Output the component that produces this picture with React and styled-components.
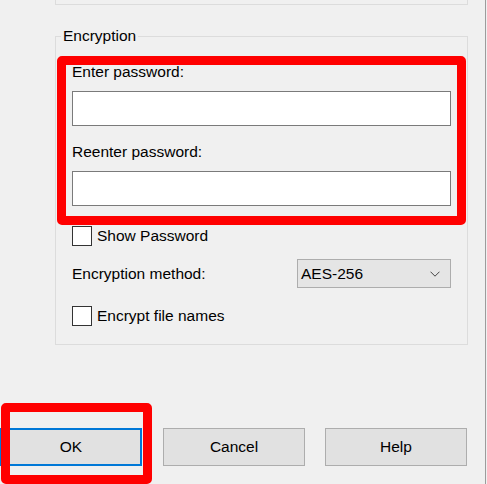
import styled, { createGlobalStyle } from "styled-components"

const Global = createGlobalStyle`
  html, body {
    margin: 0;
    padding: 0;
    background: #f0f0f0;
  }
  * { box-sizing: border-box; }
`;

export default function App(){
  return (
    <>
      <Global />
      <Dialog>
        <PrevGroup />
        <GroupBox>
          <Legend>Encryption</Legend>
          <PasswordGroup>
            <FieldLabel>Enter password:</FieldLabel>
            <TextInput type="password" />
            <FieldLabel $top={17}>Reenter password:</FieldLabel>
            <TextInput type="password" />
            <Highlight $top={-7} $right={-15} $bottom={-19} $left={-15} />
          </PasswordGroup>

          <CheckRow $top={20}>
            <Box />
            <span>Show Password</span>
          </CheckRow>

          <MethodRow>
            <span>Encryption method:</span>
            <Dropdown>
              <span>AES-256</span>
              <svg width="10" height="6" viewBox="0 0 10 6">
                <path d="M0.5 0.7 L5 5.2 L9.5 0.7" fill="none" stroke="#444" strokeWidth="1" />
              </svg>
            </Dropdown>
          </MethodRow>

          <CheckRow $top={18}>
            <Box />
            <span>Encrypt file names</span>
          </CheckRow>
        </GroupBox>

        <ButtonRow>
          <Slot>
            <Button $primary>OK</Button>
            <Highlight $top={-25} $right={-10} $bottom={-18} $left={1} />
          </Slot>
          <Button>Cancel</Button>
          <Button>Help</Button>
        </ButtonRow>
      </Dialog>
    </>
  );
}

const Dialog = styled.div`
  width: 486px;
  height: 484px;
  border-right: 1px solid #9c9c9c;
  display: flex;
  flex-direction: column;
  font-family: "Liberation Sans", Arial, sans-serif;
  font-size: 15.5px;
  color: #000;
`;

const PrevGroup = styled.div`
  margin-left: 55px;
  width: 413px;
  height: 5px;
  border: 1px solid #dcdcdc;
  border-top: none;
`;

const GroupBox = styled.fieldset`
  margin: 22px 0 0 55px;
  width: 413px;
  height: 318px;
  padding: 0 16px;
  border: 1px solid #dcdcdc;
  display: flex;
  flex-direction: column;
  min-width: 0;
`;

const Legend = styled.legend`
  margin-left: -11px;
  padding: 0 2px;
  line-height: 18px;
`;

const PasswordGroup = styled.div`
  position: relative;
  margin-top: 18px;
  display: flex;
  flex-direction: column;
`;

const FieldLabel = styled.label`
  line-height: 18px;
  margin-top: ${p => p.$top || 0}px;
  margin-bottom: 10px;
`;

const TextInput = styled.input`
  width: 100%;
  height: 35px;
  border: 1px solid #7a7a7a;
  background: #fff;
  outline: none;
`;

const Highlight = styled.div`
  position: absolute;
  top: ${p => p.$top}px;
  right: ${p => p.$right}px;
  bottom: ${p => p.$bottom}px;
  left: ${p => p.$left}px;
  border: 9px solid #ff0000;
  border-radius: 5px;
  pointer-events: none;
`;

const CheckRow = styled.label`
  display: flex;
  align-items: center;
  gap: 5px;
  margin-top: ${p => p.$top}px;
  height: 20px;
  line-height: 18px;
`;

const Box = styled.span`
  width: 20px;
  height: 20px;
  border: 1px solid #333;
  background: #fff;
`;

const MethodRow = styled.div`
  display: flex;
  align-items: center;
  justify-content: space-between;
  margin-top: 13px;
  height: 29px;
`;

const Dropdown = styled.div`
  width: 154px;
  height: 29px;
  display: flex;
  align-items: center;
  justify-content: space-between;
  padding: 0 10px 0 3px;
  background: #e5e5e5;
  border: 1px solid #adadad;
`;

const ButtonRow = styled.div`
  display: flex;
  justify-content: flex-end;
  gap: 20px;
  margin-top: 83px;
  padding-right: 18px;
`;

const Slot = styled.div`
  position: relative;
  margin-right: 1px;
`;

const Button = styled.button`
  width: 142px;
  height: 38px;
  font-family: inherit;
  font-size: 15.5px;
  color: #000;
  background: #e1e1e1;
  border: ${p => p.$primary ? "2px solid #0078d7" : "1px solid #adadad"};
  padding: 0;
`;
